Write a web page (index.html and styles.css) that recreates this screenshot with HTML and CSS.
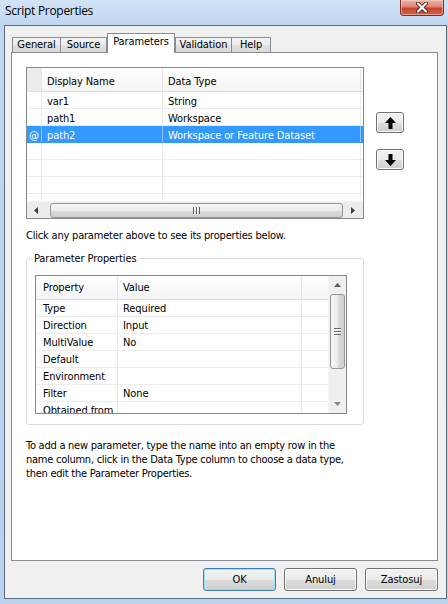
FILE: index.html
```html
<!DOCTYPE html>
<html>
<head>
<meta charset="utf-8">
<title>Script Properties</title>
<link rel="stylesheet" href="styles.css">
</head>
<body>
<div class="window">
  <div class="titlebar">
    <span class="title">Script Properties</span>
    <div class="close">
      <svg width="14" height="11" viewBox="0 0 14 11"><path d="M3 1.5 L11 9.5 M11 1.5 L3 9.5" stroke="#5a2118" stroke-width="4" stroke-linecap="round"/><path d="M3 1.5 L11 9.5 M11 1.5 L3 9.5" stroke="#ffffff" stroke-width="2.2" stroke-linecap="round"/></svg>
    </div>
  </div>
  <div class="client">
    <div class="tabs">
      <div class="tab t-general">General</div>
      <div class="tab t-source">Source</div>
      <div class="tab t-params active">Parameters</div>
      <div class="tab t-valid">Validation</div>
      <div class="tab t-help">Help</div>
    </div>
    <div class="panel">
      <div class="params-row">
        <div class="grid">
          <div class="g-head">
            <div class="c rh corner"></div>
            <div class="c name">Display Name</div>
            <div class="c type">Data Type</div>
            <div class="c rest"></div>
          </div>
          <div class="g-body">
            <div class="g-row"><div class="c rh"></div><div class="c name">var1</div><div class="c type">String</div><div class="c rest"></div></div>
            <div class="g-row"><div class="c rh"></div><div class="c name">path1</div><div class="c type">Workspace</div><div class="c rest"></div></div>
            <div class="g-row sel"><div class="c rh">@</div><div class="c name">path2</div><div class="c type">Workspace or Feature Dataset</div><div class="c rest"></div></div>
            <div class="g-row"><div class="c rh"></div><div class="c name"></div><div class="c type"></div><div class="c rest"></div></div>
            <div class="g-row"><div class="c rh"></div><div class="c name"></div><div class="c type"></div><div class="c rest"></div></div>
            <div class="g-row"><div class="c rh"></div><div class="c name"></div><div class="c type"></div><div class="c rest"></div></div>
            <div class="g-row"><div class="c rh"></div><div class="c name"></div><div class="c type"></div><div class="c rest"></div></div>
          </div>
          <div class="hscroll">
            <div class="sb-btn"><svg width="4" height="7" viewBox="0 0 4 7"><path d="M4 0 V7 L0 3.5 Z" fill="#3d3d3d"/></svg></div>
            <div class="h-thumb"><span class="grip-v"></span></div>
            <div class="sb-btn right"><svg width="4" height="7" viewBox="0 0 4 7"><path d="M0 0 V7 L4 3.5 Z" fill="#3d3d3d"/></svg></div>
          </div>
        </div>
        <div class="move-btns">
          <button class="btn move up"><svg width="11" height="12" viewBox="0 0 11 12"><path d="M5.5 0 L11 6 H7.5 V12 H3.5 V6 H0 Z" fill="#000"/></svg></button>
          <button class="btn move down"><svg width="11" height="12" viewBox="0 0 11 12"><path d="M5.5 12 L11 6 H7.5 V0 H3.5 V6 H0 Z" fill="#000"/></svg></button>
        </div>
      </div>
      <p class="hint">Click any parameter above to see its properties below.</p>
      <fieldset class="group">
        <legend>Parameter Properties</legend>
        <div class="propgrid">
          <div class="pg-main">
            <div class="p-head"><div class="c prop">Property</div><div class="c val">Value</div><div class="c extra"></div></div>
            <div class="p-row"><div class="c prop">Type</div><div class="c val">Required</div><div class="c extra"></div></div>
            <div class="p-row"><div class="c prop">Direction</div><div class="c val">Input</div><div class="c extra"></div></div>
            <div class="p-row"><div class="c prop">MultiValue</div><div class="c val">No</div><div class="c extra"></div></div>
            <div class="p-row"><div class="c prop">Default</div><div class="c val"></div><div class="c extra"></div></div>
            <div class="p-row"><div class="c prop">Environment</div><div class="c val"></div><div class="c extra"></div></div>
            <div class="p-row"><div class="c prop">Filter</div><div class="c val">None</div><div class="c extra"></div></div>
            <div class="p-row"><div class="c prop">Obtained from</div><div class="c val"></div><div class="c extra"></div></div>
          </div>
          <div class="vscroll">
            <div class="vs-btn"><svg width="7" height="4" viewBox="0 0 7 4"><path d="M0 4 H7 L3.5 0 Z" fill="#5a5a5a"/></svg></div>
            <div class="v-thumb"><span class="grip-h"></span></div>
            <div class="vs-btn bottom"><svg width="7" height="4" viewBox="0 0 7 4"><path d="M0 0 H7 L3.5 4 Z" fill="#8a8a8a"/></svg></div>
          </div>
        </div>
      </fieldset>
      <p class="help">To add a new parameter, type the name into an empty row in the<br>name column, click in the Data Type column to choose a data type,<br>then edit the Parameter Properties.</p>
    </div>
    <div class="buttons">
      <button class="btn dlg default">OK</button>
      <button class="btn dlg">Anuluj</button>
      <button class="btn dlg">Zastosuj</button>
    </div>
  </div>
</div>
</body>
</html>
```
FILE: styles.css
```css
* { box-sizing: border-box; }
html, body { margin: 0; padding: 0; }
body {
  width: 448px;
  height: 604px;
  overflow: hidden;
  font-family: "DejaVu Sans Condensed", "DejaVu Sans", sans-serif;
  font-size: 11px;
  letter-spacing: -0.1px;
  color: #000;
  background: #bcd4ee;
}
.window {
  height: 604px;
  display: flex;
  flex-direction: column;
  background: linear-gradient(to bottom, #d2e3f6 0px, #bfd6f0 25px, #b9d1ec 100%);
}
.titlebar {
  height: 25px;
  flex: none;
  display: flex;
  align-items: flex-start;
}
.title {
  font-family: "Open Sans", "Noto Sans", sans-serif;
  font-size: 12px;
  line-height: 16px;
  padding: 3px 0 0 5px;
  letter-spacing: -0.3px;
}
.close {
  margin-left: auto;
  margin-right: 4px;
  width: 44px;
  height: 16px;
  border: 1px solid #7a2e24;
  border-top: none;
  border-radius: 0 0 4px 4px;
  background: linear-gradient(to bottom, #eab2a8 0%, #dd8576 45%, #c8422c 55%, #d4624a 100%);
  box-shadow: inset 0 0 0 1px rgba(255, 220, 210, 0.5);
  display: flex;
  align-items: center;
  justify-content: center;
}
.client {
  flex: 1;
  margin: 0 1px 5px 4px;
  background: #f0f0f0;
  border: 1px solid #5b6b7d;
  display: flex;
  flex-direction: column;
}
.tabs {
  height: 26px;
  flex: none;
  display: flex;
  align-items: flex-end;
  padding-left: 7px;
}
.tab {
  height: 15px;
  line-height: 13px;
  text-align: center;
  border: 1px solid #898c95;
  border-bottom: none;
  margin-left: -1px;
  background: linear-gradient(to bottom, #f3f3f3 0%, #ebebeb 50%, #e1e1e1 51%, #d9d9d9 100%);
}
.t-general { width: 49px; margin-left: 0; }
.t-source { width: 47px; }
.t-params { width: 68px; }
.t-valid { width: 57px; }
.t-help { width: 40px; }
.tab.active {
  height: 20px;
  line-height: 16px;
  background: #fff;
  position: relative;
  margin-left: 0;
  margin-bottom: -1px;
  z-index: 1;
}
.tab.active + .tab { margin-left: 0; }
.panel {
  margin-left: 6px;
  width: 427px;
  height: 509px;
  flex: none;
  border: 1px solid #898c95;
  background: #fff;
  padding: 14px 0 0 14px;
}
.params-row { display: flex; }
.grid {
  width: 338px;
  height: 152px;
  border: 1px solid #828790;
  display: flex;
  flex-direction: column;
  background: #fff;
}
.c {
  white-space: nowrap;
  overflow: hidden;
  border-right: 1px solid #ececec;
  padding-left: 5px;
}
.g-head {
  height: 24px;
  flex: none;
  display: flex;
  align-items: stretch;
  line-height: 27px;
  border-bottom: 1px solid #dcdcdc;
  background: linear-gradient(to bottom, #ffffff, #f4f4f4);
}
.g-head .c { border-right-color: #e3e3e3; }
.rh { width: 15px; flex: none; padding: 0; text-align: center; }
.corner { background: #ececec; }
.name { width: 121px; flex: none; }
.type { width: 198px; flex: none; }
.rest { flex: 1; border-right: none; }
.g-body { flex: 1; overflow: hidden; }
.g-row {
  height: 17px;
  display: flex;
  line-height: 19px;
  border-bottom: 1px solid #ececec;
}
.g-row.sel { background: #3399ff; color: #fff; border-bottom-color: #3399ff; }
.g-row.sel .c { border-right-color: #8cc4ff; }
.hscroll {
  height: 17px;
  flex: none;
  display: flex;
  align-items: center;
  background: #ececec;
  border-top: 1px solid #f4f4f4;
}
.sb-btn {
  width: 17px;
  height: 100%;
  display: flex;
  align-items: center;
  justify-content: center;
}
.sb-btn.right { margin-left: auto; width: 19px; justify-content: flex-start; padding-left: 7px; }
.h-thumb {
  margin-left: 6px;
  width: 293px;
  height: 15px;
  border: 1px solid #979797;
  border-radius: 3px;
  background: linear-gradient(to bottom, #f5f5f5 0%, #ececec 50%, #dcdcdc 51%, #cfcfcf 100%);
  display: flex;
  align-items: center;
  justify-content: center;
}
.grip-v {
  width: 7px;
  height: 7px;
  background: repeating-linear-gradient(to right, #5a5a5a 0 1px, #f4f4f4 1px 2px, transparent 2px 3px);
}
.move-btns {
  display: flex;
  flex-direction: column;
  margin-left: 12px;
  padding-top: 45px;
  gap: 16px;
}
.btn {
  font: inherit;
  letter-spacing: inherit;
  color: #000;
  border: 1px solid #707070;
  border-radius: 3px;
  background: linear-gradient(to bottom, #f2f2f2 0%, #ebebeb 50%, #dddddd 51%, #cfcfcf 100%);
  box-shadow: inset 0 0 0 1px #fbfbfb;
  padding: 0;
}
.move {
  width: 28px;
  height: 21px;
  display: flex;
  align-items: center;
  justify-content: center;
}
.hint {
  margin: 10px 0 0 0;
  line-height: 13px;
  letter-spacing: -0.2px;
}
.group {
  margin: 10px 0 0 0;
  width: 338px;
  border: 1px solid #d5dfe5;
  border-radius: 3px;
  padding: 10px 16px 10px 8px;
}
.group legend {
  padding: 0 2px;
  margin-left: -3px;
  line-height: 13px;
}
.propgrid {
  width: 312px;
  height: 139px;
  border: 1px solid #828790;
  display: flex;
  background: #fff;
}
.pg-main { width: 292px; flex: none; overflow: hidden; }
.p-head {
  height: 24px;
  display: flex;
  line-height: 23px;
  border-bottom: 1px solid #dcdcdc;
  background: linear-gradient(to bottom, #ffffff, #f4f4f4);
}
.p-head .c { border-right-color: #e3e3e3; }
.p-row {
  height: 17px;
  display: flex;
  line-height: 18px;
  border-bottom: 1px solid #ececec;
}
.prop { width: 82px; flex: none; padding-left: 7px; }
.val { width: 184px; flex: none; }
.extra { flex: 1; border-right: none; }
.vscroll {
  flex: 1;
  display: flex;
  flex-direction: column;
  background: #efefef;
  border-left: 1px solid #f4f4f4;
}
.vs-btn {
  height: 18px;
  flex: none;
  display: flex;
  align-items: center;
  justify-content: center;
}
.vs-btn.bottom { margin-top: auto; height: 17px; padding-bottom: 1px; }
.v-thumb {
  margin: 0 1px;
  height: 75px;
  border: 1px solid #979797;
  border-radius: 3px;
  background: linear-gradient(to right, #f5f5f5 0%, #ececec 50%, #dcdcdc 51%, #cfcfcf 100%);
  display: flex;
  align-items: center;
  justify-content: center;
}
.grip-h {
  width: 7px;
  height: 7px;
  background: repeating-linear-gradient(to bottom, #6a6a6a 0 1px, #f4f4f4 1px 2px, transparent 2px 3px);
}
.help {
  margin: 14px 0 0 0;
  line-height: 14px;
  letter-spacing: -0.25px;
}
.buttons {
  flex: 1;
  display: flex;
  align-items: center;
  justify-content: flex-end;
  gap: 8px;
  padding-right: 8px;
}
.dlg {
  width: 73px;
  height: 23px;
}
.dlg.default {
  border-color: #3c7fb1;
  box-shadow: inset 0 0 0 1px #9fdcf7;
}
```
